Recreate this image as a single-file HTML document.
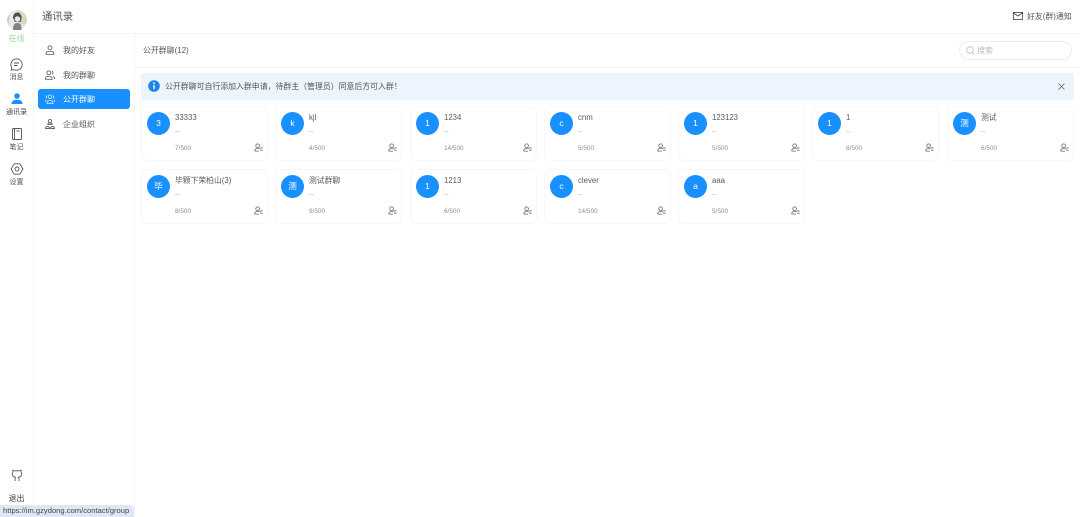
<!DOCTYPE html>
<html lang="zh">
<head>
<meta charset="utf-8">
<title>通讯录</title>
<style>
html,body{margin:0;padding:0;width:1080px;height:517px;overflow:hidden;background:#fff}
body{font-family:"Liberation Sans","Noto Sans CJK SC",sans-serif;color:#444}
#w{position:absolute;left:0;top:0;width:1080px;height:517px;overflow:hidden;background:#fff;filter:blur(.3px)}
.a{position:absolute;white-space:nowrap}
svg{position:absolute;overflow:visible;fill:none}
.line{position:absolute;background:#f3f4f5}
.nav{font-size:7px;line-height:10px;width:33px;left:0;text-align:center;color:#555}
.menu{font-size:8px;line-height:12px;left:63px;color:#555}
.card{position:absolute;width:127px;height:55px;box-sizing:border-box;border:1px solid #f6f7f8;border-radius:6px;background:#fff}
.av{position:absolute;left:5px;top:5px;width:23px;height:23px;border-radius:50%;background:#1890ff;color:#fff;font-size:8.5px;line-height:23px;text-align:center}
.nm{position:absolute;left:33px;top:5px;font-size:7.8px;line-height:12px;color:#5a5a5a;white-space:nowrap}
.ds{position:absolute;left:33px;top:21px;font-size:7px;line-height:10px;color:#aaa}
.ct{position:absolute;left:33px;top:37px;font-size:6.4px;line-height:10px;color:#8f8f8f}
.card svg{left:112px;top:36px}
</style>
</head>
<body>
<div id="w">
<svg width="0" height="0" style="position:absolute">
<defs>
<symbol id="u" viewBox="0 0 10 10"><circle cx="4" cy="3" r="2" stroke="#666" stroke-width=".9" fill="none"/><path d="M.8 9c0-2 1.300-3 3.200-3 1 0 1.700.3 2.200.8M.8 9H5.500M6.200 5.500h3.300M6.800 8h2.700" stroke="#666" stroke-width=".9" fill="none"/></symbol>
</defs>
</svg>

<div class="line" style="left:33px;top:0;width:1px;height:504px"></div>
<div class="line" style="left:134px;top:34px;width:1px;height:483px"></div>
<div class="line" style="left:34px;top:33px;width:1046px;height:1px"></div>
<div class="line" style="left:135px;top:67px;width:945px;height:1px"></div>

<!-- avatar -->
<svg style="left:7px;top:10px" width="20" height="20" viewBox="0 0 20 20">
<circle cx="10" cy="10" r="10" fill="#e8e9e3"/>
<path d="M10 0a10 10 0 0 1 9 14l-6 1-1-7z" fill="#cfdcc0"/>
<path d="M6 8c0-4 2.500-5.500 4.500-5.500S15 5 14.500 9l-1 3H8z" fill="#4a4d4f"/>
<circle cx="10.500" cy="9" r="2.800" fill="#efe6de"/>
<path d="M6 20c0-5 1.500-7 4.500-7s4 2 4 7z" fill="#7b857d"/>
<path d="M0 10a10 10 0 0 0 1.500 5L2.500 5A10 10 0 0 0 0 10z" fill="#c4c6c3"/>
</svg>
<div class="a nav" style="top:34px;color:#9bd8a2;font-size:8px">在线</div>

<!-- side icons -->
<svg style="left:10px;top:58px" width="13" height="13" viewBox="0 0 13 13"><path d="M6.500.8a5.700 5.700 0 1 1-2.600 10.800L1.200 12.200l.7-2.500A5.700 5.700 0 0 1 6.500.8zM4 5h5M4 7.500h3.500" stroke="#555" stroke-width=".9"/></svg>
<div class="a nav" style="top:73px">消息</div>
<svg style="left:11px;top:93px" width="12" height="12" viewBox="0 0 12 12"><circle cx="6" cy="3" r="2.800" fill="#1890ff"/><path d="M.5 11c0-3 2.500-4.200 5.500-4.200S11.500 8 11.500 11z" fill="#1890ff"/></svg>
<div class="a nav" style="top:108px;color:#444">通讯录</div>
<svg style="left:12px;top:128px" width="10" height="12" viewBox="0 0 10 12"><rect x=".5" y=".5" width="9" height="11" rx=".8" stroke="#555" stroke-width=".9"/><path d="M2.500.5v11M4.500 3h3" stroke="#555" stroke-width=".9"/></svg>
<div class="a nav" style="top:143px">笔记</div>
<svg style="left:11px;top:163px" width="12" height="12" viewBox="0 0 12 12"><path d="M3.200.8h5.600L12 6 8.800 11.200H3.200L0 6z" stroke="#555" stroke-width=".9" stroke-linejoin="round"/><circle cx="6" cy="6" r="2" stroke="#555" stroke-width=".9"/></svg>
<div class="a nav" style="top:178px">设置</div>
<svg style="left:11px;top:469px" width="12" height="13" viewBox="0 0 12 13"><path d="M4 12V9.800C4 9 4.300 8.600 4.600 8.300 2.600 8 1.200 7 1.200 4.800c0-.8.300-1.400.7-1.900-.1-.5-.1-1.200.1-1.700.9 0 1.500.4 2 .8a6.800 6.800 0 0 1 4 0c.5-.4 1.100-.8 2-.8.200.5.200 1.200.1 1.700.4.500.7 1.100.7 1.900 0 2.200-1.400 3.200-3.400 3.500.3.300.6.800.6 1.500V12" stroke="#555" stroke-width=".9"/></svg>
<div class="a nav" style="top:494px;font-size:8px;color:#444">退出</div>

<!-- header -->
<div class="a" style="left:42px;top:11px;font-size:10.4px;line-height:14px;color:#555">通讯录</div>
<svg style="left:1013px;top:12px" width="10" height="8" viewBox="0 0 10 8"><rect x=".4" y=".4" width="9.200" height="7.200" stroke="#444" stroke-width=".8"/><path d="M.5 1l4.500 3 4.500-3" stroke="#444" stroke-width=".8"/></svg>
<div class="a" style="left:1027px;top:11px;font-size:7.900px;line-height:11px;color:#555">好友(群)通知</div>

<!-- menu -->
<div class="a" style="left:38px;top:89px;width:92px;height:20px;background:#1890ff;border-radius:3px"></div>
<svg style="left:45px;top:45px" width="10" height="10" viewBox="0 0 10 10"><circle cx="5" cy="2.800" r="2" stroke="#666" stroke-width=".9"/><path d="M1 9.300c0-2.200.8-3 4-3s4 .8 4 3z" stroke="#666" stroke-width=".9"/></svg>
<div class="a menu" style="top:45px">我的好友</div>
<svg style="left:45px;top:70px" width="10" height="10" viewBox="0 0 10 10"><circle cx="3.800" cy="2.800" r="1.900" stroke="#666" stroke-width=".9"/><path d="M.5 9.300c0-2.200.6-3 3.300-3s3.300.8 3.300 3zM7 1c1.200.5 1.200 2.800 0 3.400M8.300 6.300c.8.400 1.200 1.200 1.200 2.800" stroke="#666" stroke-width=".9"/></svg>
<div class="a menu" style="top:70px">我的群聊</div>
<svg style="left:45px;top:94px" width="10" height="10" viewBox="0 0 10 10"><circle cx="5" cy="2.800" r="1.800" stroke="#fff" stroke-width=".8" opacity=".85"/><path d="M2 9.300c0-2 .8-2.800 3-2.800s3 .8 3 2.800zM2 1.500C1 2.200 1 3.500 2 4.300M8 1.500c1 .7 1 2 0 2.800M.4 7.800c0-1 .4-1.600 1-2M9.600 7.800c0-1-.4-1.600-1-2" stroke="#fff" stroke-width=".8" opacity=".85"/></svg>
<div class="a menu" style="top:94px;color:#fff">公开群聊</div>
<svg style="left:45px;top:119px" width="10" height="10" viewBox="0 0 10 10"><circle cx="5" cy="2" r="1.600" stroke="#666" stroke-width=".9"/><path d="M2.800 5.600c0-1 .8-1.600 2.200-1.600s2.200.6 2.200 1.600zM.5 9.500c0-1.300.6-2 2-2s2 .7 2 2zM5.500 9.500c0-1.300.6-2 2-2s2 .7 2 2z" stroke="#666" stroke-width=".9"/></svg>
<div class="a menu" style="top:119px">企业组织</div>

<!-- sub header -->
<div class="a" style="left:143px;top:45px;font-size:7.900px;line-height:12px;color:#555">公开群聊(12)</div>
<div class="a" style="left:959px;top:41px;width:113px;height:19px;box-sizing:border-box;border:1px solid #eceeef;border-radius:10px"></div>
<svg style="left:966px;top:46px" width="9" height="9" viewBox="0 0 9 9"><circle cx="4" cy="4" r="3.300" stroke="#bbb" stroke-width=".8"/><path d="M6.500 6.500L8.500 8.500" stroke="#bbb" stroke-width=".8"/></svg>
<div class="a" style="left:977px;top:45px;font-size:8px;line-height:11px;color:#bbb">搜索</div>

<!-- alert -->
<div class="a" style="left:141px;top:73px;width:933px;height:27px;background:#ecf4fd;border-radius:2px"></div>
<svg style="left:148px;top:80px" width="12" height="12" viewBox="0 0 12 12"><circle cx="6" cy="6" r="5.800" fill="#1f84ea"/><path d="M6 5.200v4" stroke="#fff" stroke-width="1.400"/><circle cx="6" cy="3.300" r=".9" fill="#fff"/></svg>
<div class="a" style="left:165px;top:81px;font-size:7.900px;line-height:12px;color:#555">公开群聊可自行添加入群申请，待群主（管理员）同意后方可入群！</div>
<svg style="left:1058px;top:83px" width="7" height="7" viewBox="0 0 7 7"><path d="M.5.500l6 6M6.500.500l-6 6" stroke="#666" stroke-width=".8"/></svg>

<!-- cards row 1 -->
<div class="card" style="left:141px;top:106px"><div class="av">3</div><div class="nm">33333</div><div class="ds">--</div><div class="ct">7/500</div><svg width="9" height="9"><use href="#u"/></svg></div>
<div class="card" style="left:275px;top:106px"><div class="av">k</div><div class="nm">kjl</div><div class="ds">--</div><div class="ct">4/500</div><svg width="9" height="9"><use href="#u"/></svg></div>
<div class="card" style="left:410px;top:106px"><div class="av">1</div><div class="nm">1234</div><div class="ds">--</div><div class="ct">14/500</div><svg width="9" height="9"><use href="#u"/></svg></div>
<div class="card" style="left:544px;top:106px"><div class="av">c</div><div class="nm">cnm</div><div class="ds">--</div><div class="ct">5/500</div><svg width="9" height="9"><use href="#u"/></svg></div>
<div class="card" style="left:678px;top:106px"><div class="av">1</div><div class="nm">123123</div><div class="ds">--</div><div class="ct">5/500</div><svg width="9" height="9"><use href="#u"/></svg></div>
<div class="card" style="left:812px;top:106px"><div class="av">1</div><div class="nm">1</div><div class="ds">--</div><div class="ct">8/500</div><svg width="9" height="9"><use href="#u"/></svg></div>
<div class="card" style="left:947px;top:106px"><div class="av">测</div><div class="nm">测试</div><div class="ds">--</div><div class="ct">6/500</div><svg width="9" height="9"><use href="#u"/></svg></div>

<!-- cards row 2 -->
<div class="card" style="left:141px;top:169px"><div class="av">毕</div><div class="nm">毕颗下荣柏山(3)</div><div class="ds">--</div><div class="ct">8/500</div><svg width="9" height="9"><use href="#u"/></svg></div>
<div class="card" style="left:275px;top:169px"><div class="av">测</div><div class="nm">测试群聊</div><div class="ds">--</div><div class="ct">9/500</div><svg width="9" height="9"><use href="#u"/></svg></div>
<div class="card" style="left:410px;top:169px"><div class="av">1</div><div class="nm">1213</div><div class="ds">--</div><div class="ct">6/500</div><svg width="9" height="9"><use href="#u"/></svg></div>
<div class="card" style="left:544px;top:169px"><div class="av">c</div><div class="nm">clever</div><div class="ds">--</div><div class="ct">14/500</div><svg width="9" height="9"><use href="#u"/></svg></div>
<div class="card" style="left:678px;top:169px"><div class="av">a</div><div class="nm">aaa</div><div class="ds">--</div><div class="ct">5/500</div><svg width="9" height="9"><use href="#u"/></svg></div>

<!-- status bar -->
<div class="a" style="left:0;top:505px;width:134px;height:12px;background:#dfe7f5;border-radius:0 4px 0 0"></div>
<div class="a" style="left:3px;top:505px;font-size:7.600px;line-height:12px;color:#444">https://im.gzydong.com/contact/group</div>
</div>
</body>
</html>
